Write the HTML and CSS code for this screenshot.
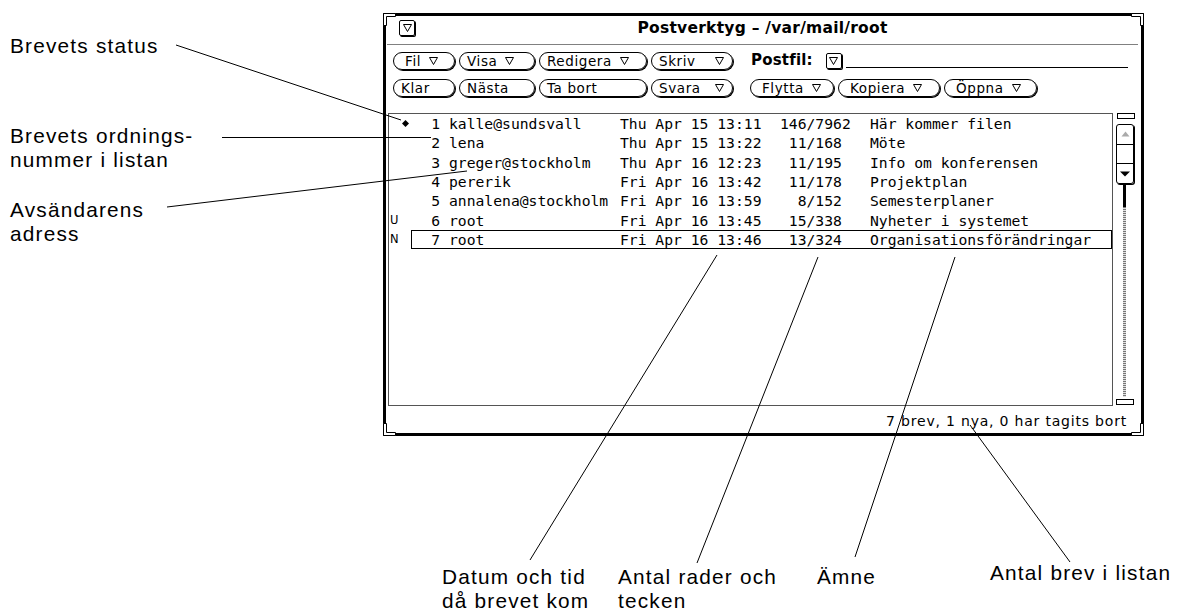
FILE: index.html
```html
<!DOCTYPE html>
<html lang="sv">
<head>
    <meta charset="UTF-8">
    <meta name="viewport" content="width=device-width, initial-scale=1.0">
    <title>Postverktyg</title>
    <link rel="stylesheet" href="styles.css">
</head>
<body>
    <div class="window">
        <svg class="corner tl" width="14" height="14"><path d="M0.5 0.5H12.5V3.5H3.5V12.5H0.5Z"/></svg>
        <svg class="corner tr" width="14" height="14"><path d="M0.5 0.5H12.5V3.5H3.5V12.5H0.5Z"/></svg>
        <svg class="corner bl" width="14" height="14"><path d="M0.5 0.5H12.5V3.5H3.5V12.5H0.5Z"/></svg>
        <svg class="corner br" width="14" height="14"><path d="M0.5 0.5H12.5V3.5H3.5V12.5H0.5Z"/></svg>

        <div class="titlebar">
            <div class="title-left">
                <span class="menubox"><svg class="mark" width="9" height="8"><path d="M0.5 0.5H8.5L4.5 7.5Z"/></svg></span>
            </div>
            <div class="title">Postverktyg – /var/mail/root</div>
            <div></div>
        </div>

        <div class="controls">
            <div class="btnrow">
                <span class="btn c1 roomy">Fil<svg class="mark" width="9" height="8"><path d="M0.5 0.5H8.5L4.5 7.5Z"/></svg></span>
                <span class="btn c2">Visa<svg class="mark" width="9" height="8"><path d="M0.5 0.5H8.5L4.5 7.5Z"/></svg></span>
                <span class="btn c3">Redigera<svg class="mark" width="9" height="8"><path d="M0.5 0.5H8.5L4.5 7.5Z"/></svg></span>
                <span class="btn c4 end">Skriv<svg class="mark" width="9" height="8"><path d="M0.5 0.5H8.5L4.5 7.5Z"/></svg></span>
                <div class="postfil">
                    <span class="postfil-label">Postfil:</span>
                    <span class="menubox"><svg class="mark" width="9" height="8"><path d="M0.5 0.5H8.5L4.5 7.5Z"/></svg></span>
                    <span class="field"></span>
                </div>
            </div>
            <div class="btnrow">
                <span class="btn c1">Klar</span>
                <span class="btn c2">Nästa</span>
                <span class="btn c3">Ta bort</span>
                <span class="btn c4 end">Svara<svg class="mark" width="9" height="8"><path d="M0.5 0.5H8.5L4.5 7.5Z"/></svg></span>
                <span class="btn b-flytta roomy first-right">Flytta<svg class="mark" width="9" height="8"><path d="M0.5 0.5H8.5L4.5 7.5Z"/></svg></span>
                <span class="btn b-kopiera roomy">Kopiera<svg class="mark" width="9" height="8"><path d="M0.5 0.5H8.5L4.5 7.5Z"/></svg></span>
                <span class="btn b-oppna roomy">Öppna<svg class="mark" width="9" height="8"><path d="M0.5 0.5H8.5L4.5 7.5Z"/></svg></span>
            </div>
        </div>

        <div class="listpane">
            <div class="list">
                <div class="row">
                    <span class="flag"></span>
                    <span class="ptr"><svg width="7" height="7"><path d="M3.5 0L7 3.5 3.5 7 0 3.5Z"/></svg></span>
                    <div class="entry"><span class="num">1</span><span class="from">kalle@sundsvall</span><span class="date">Thu Apr 15 13:11</span><span class="size">146/7962</span><span class="subj">Här kommer filen</span></div>
                </div>
                <div class="row">
                    <span class="flag"></span><span class="ptr"></span>
                    <div class="entry"><span class="num">2</span><span class="from">lena</span><span class="date">Thu Apr 15 13:22</span><span class="size"> 11/168</span><span class="subj">Möte</span></div>
                </div>
                <div class="row">
                    <span class="flag"></span><span class="ptr"></span>
                    <div class="entry"><span class="num">3</span><span class="from">greger@stockholm</span><span class="date">Thu Apr 16 12:23</span><span class="size"> 11/195</span><span class="subj">Info om konferensen</span></div>
                </div>
                <div class="row">
                    <span class="flag"></span><span class="ptr"></span>
                    <div class="entry"><span class="num">4</span><span class="from">pererik</span><span class="date">Fri Apr 16 13:42</span><span class="size"> 11/178</span><span class="subj">Projektplan</span></div>
                </div>
                <div class="row">
                    <span class="flag"></span><span class="ptr"></span>
                    <div class="entry"><span class="num">5</span><span class="from">annalena@stockholm</span><span class="date">Fri Apr 16 13:59</span><span class="size">  8/152</span><span class="subj">Semesterplaner</span></div>
                </div>
                <div class="row">
                    <span class="flag">U</span><span class="ptr"></span>
                    <div class="entry"><span class="num">6</span><span class="from">root</span><span class="date">Fri Apr 16 13:45</span><span class="size"> 15/338</span><span class="subj">Nyheter i systemet</span></div>
                </div>
                <div class="row">
                    <span class="flag">N</span><span class="ptr"></span>
                    <div class="entry selected"><span class="num">7</span><span class="from">root</span><span class="date">Fri Apr 16 13:46</span><span class="size"> 13/324</span><span class="subj">Organisationsförändringar</span></div>
                </div>
            </div>

            <div class="scrollbar">
                <div class="anchor"></div>
                <div class="elevator">
                    <div class="el-part"><svg width="9" height="6"><path d="M4.5 0.5L8.5 5.5H0.5Z" class="dim"/></svg></div>
                    <div class="el-part"></div>
                    <div class="el-part"><svg width="10" height="6"><path d="M0 0.5H10L5 5.5Z"/></svg></div>
                </div>
                <div class="cable"></div>
                <div class="anchor low"></div>
            </div>
        </div>

        <div class="status">7 brev, 1 nya, 0 har tagits bort</div>
    </div>

    <div class="callout l-status">Brevets status</div>
    <div class="callout l-nummer">Brevets ordnings-<br>nummer i listan</div>
    <div class="callout l-adress">Avsändarens<br>adress</div>
    <div class="callout l-datum">Datum och tid<br>då brevet kom</div>
    <div class="callout l-rader">Antal rader och<br>tecken</div>
    <div class="callout l-amne">Ämne</div>
    <div class="callout l-antal">Antal brev i listan</div>

    <svg class="leaders" width="1178" height="610">
        <line x1="176" y1="45" x2="401" y2="120"/>
        <line x1="222" y1="137.5" x2="431" y2="137.5"/>
        <line x1="167" y1="207" x2="467" y2="171"/>
        <line x1="717" y1="255" x2="530" y2="560"/>
        <line x1="818" y1="257" x2="697" y2="563"/>
        <line x1="955" y1="257" x2="855" y2="557"/>
        <line x1="970" y1="425" x2="1070" y2="562"/>
    </svg>
</body>
</html>
```

FILE: styles.css
```css
html, body {
    margin: 0;
    overflow: hidden;
}
body {
    padding-top: 13px;
    background-color: #fff;
    color: #000;
    font-family: "DejaVu Sans", sans-serif;
}

/* window frame */
.window {
    position: relative;
    box-sizing: border-box;
    width: 761px;
    height: 423px;
    margin-left: 383px;
    border: 3px solid #000;
    display: flex;
    flex-direction: column;
}
.corner {
    position: absolute;
}
.corner path {
    fill: #fff;
    stroke: #000;
}
.corner.tl { top: -3px; left: -3px; }
.corner.tr { top: -3px; right: -3px; transform: scaleX(-1); }
.corner.bl { bottom: -3px; left: -3px; transform: scaleY(-1); }
.corner.br { bottom: -3px; right: -3px; transform: scale(-1, -1); }

.mark path {
    fill: #fff;
    stroke: #000;
}
.menubox {
    box-sizing: border-box;
    width: 16px;
    height: 16px;
    border: 1px solid #000;
    border-radius: 2px;
    box-shadow: 1px 1px 0 #000;
    display: flex;
    align-items: center;
    justify-content: center;
}

.titlebar {
    display: grid;
    grid-template-columns: 1fr auto 1fr;
    align-items: start;
    height: 24px;
    padding-top: 4px;
    margin: 0 3px 0 1px;
    border-bottom: 1px solid #808080;
}
.title-left {
    padding-left: 12px;
}
.title {
    font-weight: bold;
    font-size: 15.5px;
    letter-spacing: 0.25px;
    line-height: 16px;
}

/* control area */
.controls {
    padding: 7px 0 0 7px;
    display: flex;
    flex-direction: column;
    gap: 9px;
}
.btnrow {
    display: flex;
    align-items: center;
    gap: 4px;
    height: 18px;
}
.btn {
    box-sizing: border-box;
    height: 18px;
    display: inline-flex;
    align-items: center;
    padding-left: 7px;
    border: 1px solid #000;
    border-radius: 9px;
    box-shadow: 1px 1px 0 #000;
    font-size: 13.5px;
    letter-spacing: 0.6px;
    line-height: 16px;
    white-space: nowrap;
}
.btn .mark {
    margin-left: 8px;
}
.btn.end .mark {
    margin-left: auto;
    margin-right: 8px;
}
.btn.roomy {
    padding-left: 11px;
}
.c1 { width: 62px; }
.c2 { width: 76px; }
.c3 { width: 108px; }
.c4 { width: 82px; }
.b-flytta { width: 84px; }
.b-kopiera { width: 102px; }
.b-oppna { width: 93px; }
.first-right {
    margin-left: 13px;
}

.postfil {
    flex: 1;
    display: flex;
    align-items: center;
    margin-left: 14px;
    margin-right: 13px;
}
.postfil-label {
    font-weight: bold;
    font-size: 15px;
    letter-spacing: 0.2px;
    margin-top: -3px;
}
.postfil .menubox {
    margin-left: 13px;
}
.field {
    flex: 1;
    align-self: flex-start;
    height: 14px;
    margin-left: 4px;
    border-bottom: 1px solid #000;
}

/* message list */
.listpane {
    margin-top: 16px;
    height: 293px;
    display: flex;
    gap: 3px;
    padding: 0 6px 0 2px;
}
.list {
    flex: 1;
    border: 1px solid #555;
    font-family: "DejaVu Sans Mono", monospace;
    font-size: 14.7px;
}
.row {
    display: flex;
    height: 19.33px;
}
.flag {
    width: 10px;
    font-family: "DejaVu Sans", sans-serif;
    font-size: 11.5px;
    line-height: 19px;
    padding-left: 1px;
    box-sizing: border-box;
}
.ptr {
    width: 12px;
    display: flex;
    align-items: center;
    justify-content: center;
}
.entry {
    flex: 1;
    display: flex;
    border: 1px solid transparent;
    line-height: 17.33px;
    white-space: pre;
}
.entry.selected {
    border-color: #000;
}
.num {
    width: 28px;
    text-align: right;
}
.from {
    width: 171px;
    margin-left: 9px;
}
.date { width: 160px; }
.size { width: 90px; }

/* scrollbar */
.scrollbar {
    width: 19px;
    display: flex;
    flex-direction: column;
}
.anchor {
    box-sizing: border-box;
    width: 18px;
    height: 6px;
    margin-left: 1px;
    border: 1px solid #000;
}
.anchor.low {
    margin: 2px 0 1px 0;
}
.elevator {
    box-sizing: border-box;
    width: 18px;
    height: 60px;
    margin-top: 5px;
    border: 1px solid #000;
    border-radius: 3px;
    box-shadow: 1px 1px 0 #000;
    display: flex;
    flex-direction: column;
}
.el-part {
    flex: 1;
    display: flex;
    align-items: center;
    justify-content: center;
}
.el-part + .el-part {
    border-top: 1px solid #000;
}
.el-part .dim {
    fill: #aaa;
}
.cable {
    flex: 1;
    width: 3px;
    margin: 1px 0 0 7px;
    background:
        linear-gradient(#000, #000) top / 100% 22px no-repeat,
        repeating-linear-gradient(#777 0 1px, #e0e0e0 1px 2px);
}

.status {
    flex: 1;
    display: flex;
    align-items: center;
    justify-content: flex-end;
    padding: 2px 14px 0 0;
    font-size: 14px;
    letter-spacing: 0.8px;
}

/* callout labels around the screenshot */
.callout {
    position: absolute;
    font-family: "Liberation Sans", Arial, sans-serif;
    font-size: 20.8px;
    letter-spacing: 1.2px;
    line-height: 24px;
    white-space: nowrap;
}
.l-status { left: 10px; top: 34px; }
.l-nummer { left: 10px; top: 124px; }
.l-adress { left: 10px; top: 198px; }
.l-datum { left: 442px; top: 565px; }
.l-rader { left: 618px; top: 565px; }
.l-amne { left: 817px; top: 565px; }
.l-antal { left: 990px; top: 561px; }

.leaders {
    position: absolute;
    left: 0;
    top: 0;
    pointer-events: none;
}
.leaders line {
    stroke: #000;
    stroke-width: 1;
}
```
